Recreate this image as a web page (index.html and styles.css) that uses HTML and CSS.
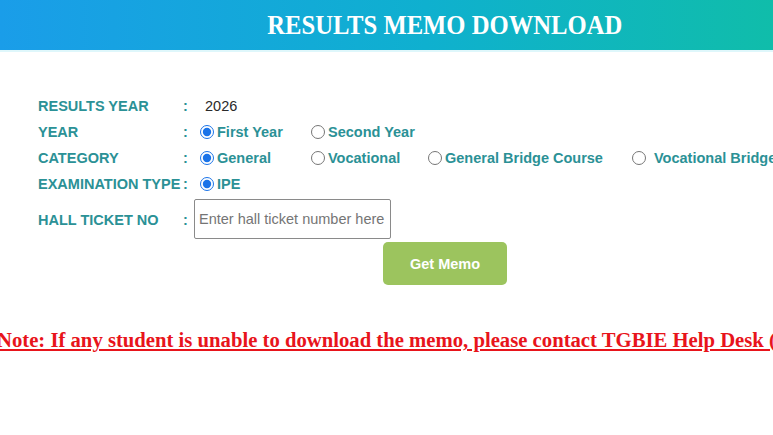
FILE: index.html
```html
<!DOCTYPE html>
<html>
<head>
<meta charset="utf-8">
<link rel="stylesheet" href="styles.css">
</head>
<body>
<header class="banner"><h1 class="title">RESULTS MEMO DOWNLOAD</h1></header>
<main class="form">
  <div class="row"><span class="label">RESULTS YEAR</span><span class="colon">:</span><span class="plain">2026</span></div>
  <div class="row"><span class="label">YEAR</span><span class="colon">:</span>
    <div class="opts">
      <label class="opt w-first"><input type="radio" name="yr" checked>First Year</label>
      <label class="opt"><input type="radio" name="yr">Second Year</label>
    </div>
  </div>
  <div class="row"><span class="label">CATEGORY</span><span class="colon">:</span>
    <div class="opts">
      <label class="opt w-first"><input type="radio" name="cat" checked>General</label>
      <label class="opt w-voc"><input type="radio" name="cat">Vocational</label>
      <label class="opt w-gbc"><input type="radio" name="cat">General Bridge Course</label>
      <label class="opt opt-wide"><input type="radio" name="cat">Vocational Bridge Course</label>
    </div>
  </div>
  <div class="row"><span class="label">EXAMINATION TYPE</span><span class="colon">:</span>
    <div class="opts"><label class="opt"><input type="radio" name="et" checked>IPE</label></div>
  </div>
  <div class="row row-ht"><span class="label">HALL TICKET NO</span><span class="colon">:</span>
    <input class="ht" type="text" placeholder="Enter hall ticket number here">
  </div>
  <div class="actions"><button class="btn">Get Memo</button></div>
</main>
<p class="note">Note: If any student is unable to download the memo, please contact TGBIE Help Desk (040-24600110)</p>
</body>
</html>
```
FILE: styles.css
```css
html, body { margin: 0; padding: 0; overflow: hidden; background: #fff; }
body { font-family: "Liberation Sans", Arial, sans-serif; }
.banner {
  height: 50px;
  background: linear-gradient(90deg, #1a9de9 0%, #0fb0cf 55%, #10bdaa 100%);
  border-bottom: 2px solid #dff7fb;
  display: flex; align-items: center; justify-content: center;
}
.title {
  margin: 0 0 0 117px;
  font-family: "Liberation Serif", "Times New Roman", serif;
  font-weight: bold; font-size: 28px; color: #fff;
  transform: scaleX(0.88);
}
.form { padding: 41px 0 0 38px; }
.row { display: grid; grid-template-columns: 145px 12px 1fr; align-items: center; height: 26px; }
.label { font-weight: bold; font-size: 14.5px; color: #2b9196; white-space: nowrap; }
.colon { font-weight: bold; font-size: 14.5px; color: #2b9196; }
.plain { font-size: 14.5px; color: #2a2a2a; padding-left: 10px; }
.opts { display: flex; align-items: center; white-space: nowrap; }
.opt { display: flex; align-items: center; font-weight: bold; font-size: 14.5px; color: #2b9196; }
.opt input { margin: 0 3px 0 5px; width: 14px; height: 14px; accent-color: #1a73e8; }
.opt-wide input { margin-right: 8px; }
.w-first { width: 111px; }
.w-voc { width: 117px; }
.w-gbc { width: 204px; }
.row-ht { height: 40px; margin-top: 2px; }
.row-ht .label, .row-ht .colon { position: relative; top: 1px; }
.ht {
  width: 197px; height: 40px; box-sizing: border-box; margin: 0 0 0 -1px;
  border: 1px solid #8a8a8a; border-radius: 2px; padding: 0 4px;
  font-family: "Liberation Sans", Arial, sans-serif; font-size: 14.5px; color: #333;
}
.ht::placeholder { color: #757575; }
.actions { padding: 3px 0 0 345px; }
.btn {
  width: 124px; height: 43px; border: 0; border-radius: 5px;
  background: #9cc45e; color: #fff; font-weight: bold; font-size: 14.5px;
  font-family: "Liberation Sans", Arial, sans-serif;
}
.note {
  margin: 44px 0 0 -3px; white-space: nowrap;
  font-family: "Liberation Serif", "Times New Roman", serif;
  font-weight: bold; font-size: 20.7px; color: #e8141b; text-decoration: underline;
}
```
